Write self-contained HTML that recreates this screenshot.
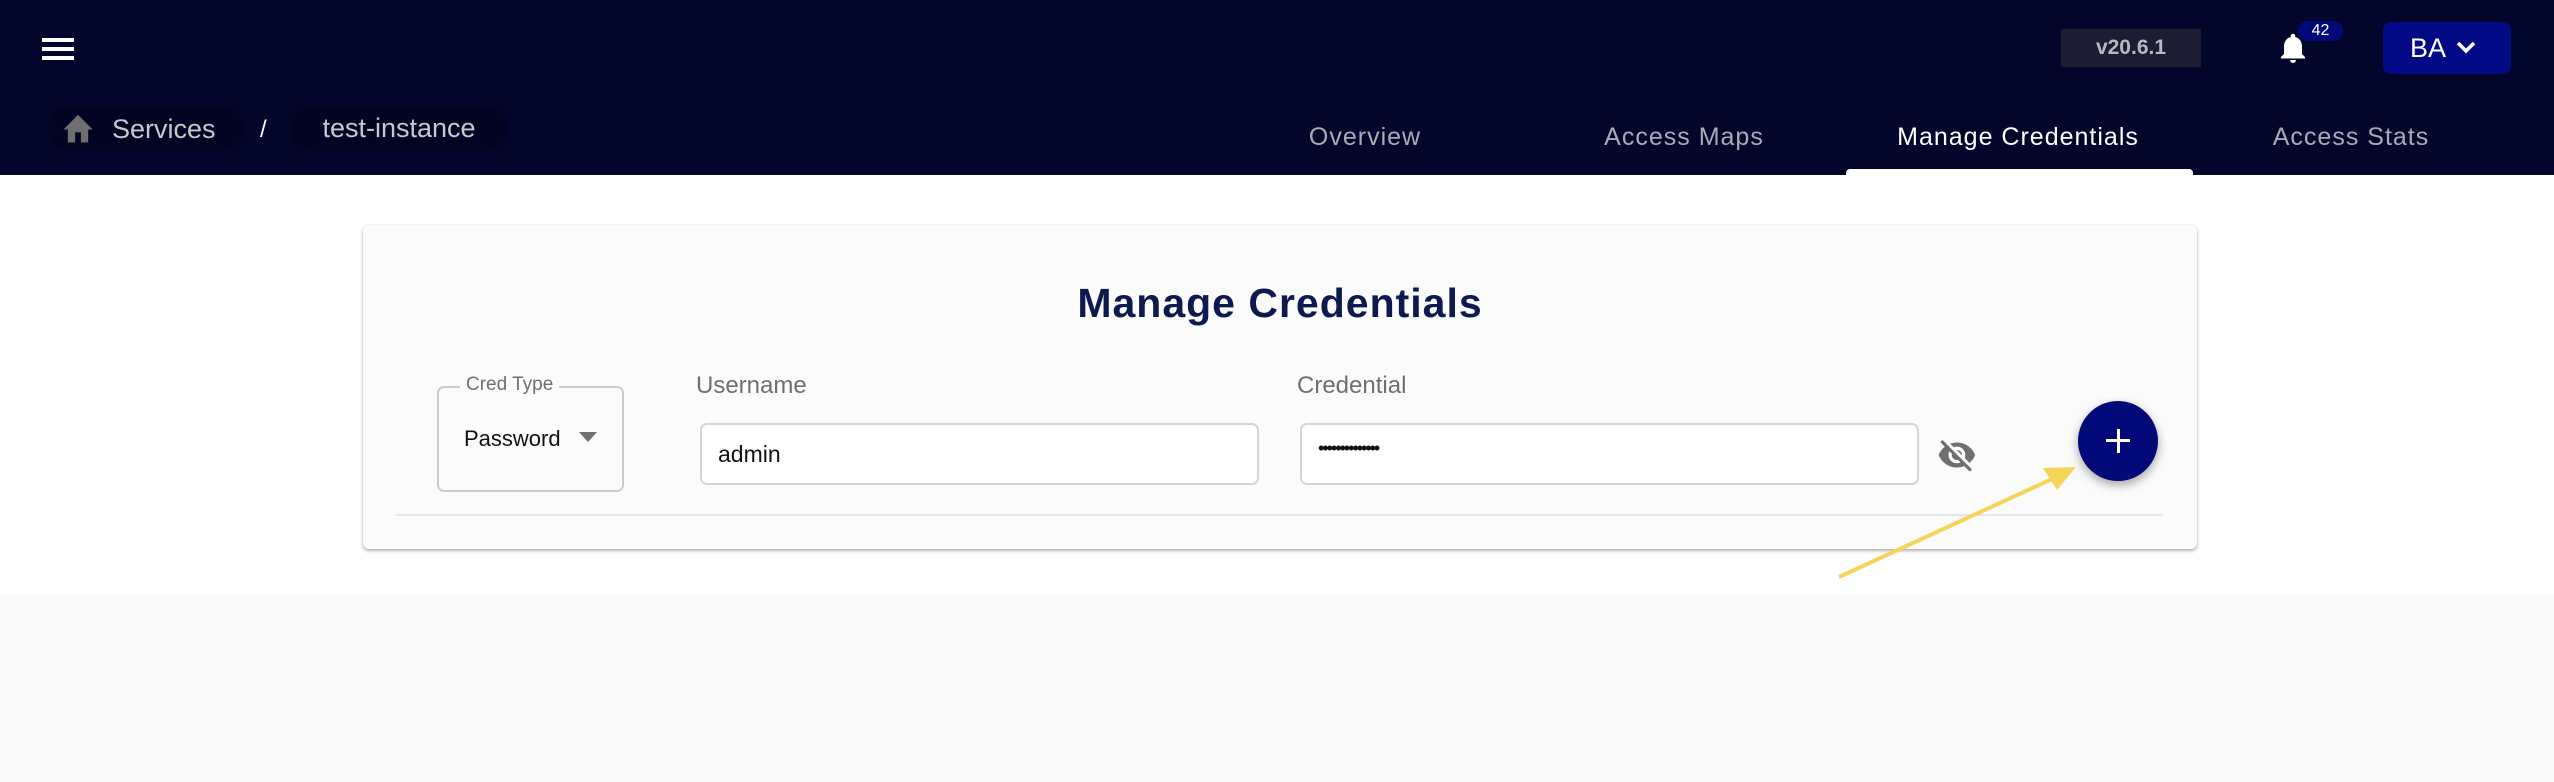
<!DOCTYPE html>
<html><head><meta charset="utf-8"><style>
*{margin:0;padding:0;box-sizing:border-box}
body{width:2554px;height:782px;background:#fafafa;font-family:"Liberation Sans",sans-serif;position:relative;overflow:hidden}
.abs{position:absolute}
.hdr{left:0;top:0;width:2554px;height:175px;background:#03062b;box-shadow:0 3px 4px rgba(0,0,0,.3)}
.white{left:0;top:175px;width:2554px;height:420px;background:#fff}
.pill{background:#020423;border-radius:24px;height:43px;top:107px;color:#c8c8cc;font-size:27px;line-height:43px}
.tab{top:123px;font-size:25px;color:#a9aab5;letter-spacing:1px;transform:translateX(-50%);white-space:nowrap}
.card{left:363px;top:225px;width:1834px;height:324px;background:#fbfbfb;border-radius:6px;box-shadow:0 2px 3px rgba(0,0,0,.3),0 0 2px rgba(0,0,0,.08)}
.lbl{color:#6f6f72;font-size:24px}
.inp{background:#fff;border:2px solid #d2d5dc;border-radius:7px;height:62px;top:423px}
</style></head><body>
<div class="abs hdr"></div>
<div class="abs white"></div>
<div class="abs" style="left:42px;top:38px;width:32px;height:4px;background:#fff"></div>
<div class="abs" style="left:42px;top:47px;width:32px;height:4px;background:#fff"></div>
<div class="abs" style="left:42px;top:56px;width:32px;height:4px;background:#fff"></div>
<div class="abs pill" style="left:48px;width:195px"></div>
<svg class="abs" style="left:60px;top:112px" width="36" height="32" viewBox="0 0 24 22"><path d="M10 21v-7h4v7h5v-9h3L12 2 2 12h3v9z" fill="#6f6f6f"/></svg>
<div class="abs" style="left:112px;top:108px;font-size:27px;line-height:43px;color:#c8c8cc">Services</div>
<div class="abs" style="left:260px;top:108px;font-size:24px;line-height:43px;color:#fff">/</div>
<div class="abs pill" style="left:290px;width:218px;text-align:center">test-instance</div>
<div class="abs" style="left:2061px;top:29px;width:140px;height:38px;background:#1c1d33;color:#b8b8bf;font-size:21px;font-weight:bold;text-align:center;line-height:38px">v20.6.1</div>
<svg class="abs" style="left:2280px;top:33px" width="26" height="30" viewBox="0 0 16 20"><path d="M8 20a2 2 0 0 0 2-2H6a2 2 0 0 0 2 2zm6-6V9c0-3-1.6-5.6-4.5-6.3V2a1.5 1.5 0 0 0-3 0v.7C3.6 3.4 2 6 2 9v5l-2 2v1h16v-1z" fill="#fff"/></svg>
<div class="abs" style="left:2298px;top:21px;width:45px;height:20px;border-radius:10px;background:#020a7a;color:#fff;font-size:16px;text-align:center;line-height:20px">42</div>
<div class="abs" style="left:2383px;top:22px;width:128px;height:52px;border-radius:8px;background:#020a85;color:#fff;font-size:27px;line-height:52px;padding-left:27px">BA</div>
<svg class="abs" style="left:2455px;top:40px" width="22" height="16" viewBox="0 0 22 16"><path d="M3 3l8 8 8-8" stroke="#fff" stroke-width="3.5" fill="none"/></svg>
<div class="abs tab" style="left:1365px">Overview</div>
<div class="abs tab" style="left:1684px">Access Maps</div>
<div class="abs tab" style="left:2018px;color:#fff">Manage Credentials</div>
<div class="abs tab" style="left:2351px">Access Stats</div>
<div class="abs" style="left:1846px;top:169px;width:347px;height:7px;background:#fff;border-radius:4px 4px 0 0"></div>
<div class="abs card"></div>
<div class="abs" style="left:363px;width:1834px;top:280px;text-align:center;font-size:41px;font-weight:bold;color:#0d1a4f;letter-spacing:1px">Manage Credentials</div>
<div class="abs" style="left:437px;top:386px;width:187px;height:106px;border:2px solid #c9ccd3;border-radius:7px"></div>
<div class="abs" style="left:460px;top:374px;background:#fbfbfb;padding:0 6px;color:#6f6f72;font-size:19px">Cred Type</div>
<div class="abs" style="left:464px;top:426px;font-size:22px;color:#111">Password</div>
<div class="abs" style="left:579px;top:432px;width:0;height:0;border-left:9px solid transparent;border-right:9px solid transparent;border-top:10px solid #707070"></div>
<div class="abs lbl" style="left:696px;top:372px">Username</div>
<div class="abs inp" style="left:700px;width:559px"></div>
<div class="abs" style="left:718px;top:441px;font-size:23px;color:#111">admin</div>
<div class="abs lbl" style="left:1297px;top:372px">Credential</div>
<div class="abs inp" style="left:1300px;width:619px"></div>
<div class="abs" style="left:1318px;top:438px;font-size:18px;color:#111;letter-spacing:-2px">••••••••••••••</div>
<svg class="abs" style="left:1936px;top:435px" width="42" height="40" viewBox="0 0 24 24"><path d="M12 7c2.8 0 5 2.2 5 5 0 .7-.1 1.3-.4 1.8l2.9 2.9c1.5-1.3 2.7-2.9 3.4-4.7-1.7-4.4-6-7.5-11-7.5-1.4 0-2.7.3-4 .7l2.2 2.2c.6-.3 1.2-.4 1.9-.4zM2 4.3l2.3 2.3.4.4C3.1 8.3 1.8 10 1 12c1.7 4.4 6 7.5 11 7.5 1.6 0 3-.3 4.4-.8l.4.4 2.9 2.9 1.3-1.3L3.3 3 2 4.3zm5.5 5.5l1.5 1.5c0 .2-.1.5-.1.7 0 1.7 1.3 3 3 3 .2 0 .4 0 .7-.1l1.5 1.5c-.7.3-1.4.5-2.2.5-2.8 0-5-2.2-5-5 0-.8.2-1.5.5-2.1zm4.3-.8l3.2 3.2V12c0-1.7-1.3-3-3-3h-.2z" fill="#6f6f6f"/></svg>
<div class="abs" style="left:2078px;top:401px;width:80px;height:80px;border-radius:50%;background:#020a7a;box-shadow:0 4px 10px rgba(0,0,0,.35)"></div>
<div class="abs" style="left:2106px;top:439px;width:24px;height:3px;background:#fff"></div>
<div class="abs" style="left:2116.5px;top:429px;width:3px;height:24px;background:#fff"></div>
<div class="abs" style="left:396px;top:514px;width:1767px;height:2px;background:#e6e6e8"></div>
<svg class="abs" style="left:0;top:0" width="2554" height="782"><line x1="1839" y1="577" x2="2052" y2="479" stroke="#f5d45a" stroke-width="4"/><polygon points="2076,467 2043,468 2057,490" fill="#f5d45a"/></svg>
</body></html>
